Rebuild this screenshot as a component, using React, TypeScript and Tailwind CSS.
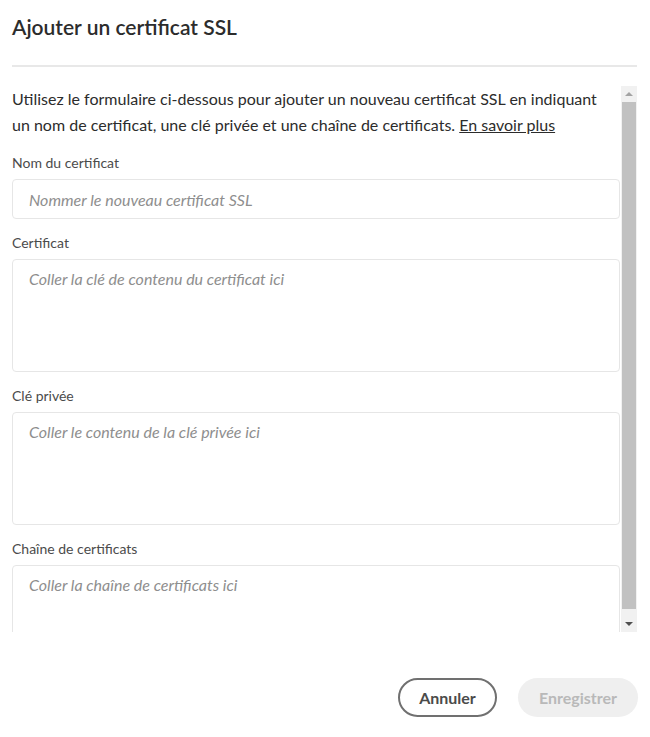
const fields = [
  { label: "Nom du certificat", placeholder: "Nommer le nouveau certificat SSL", multiline: false },
  { label: "Certificat", placeholder: "Coller la clé de contenu du certificat ici", multiline: true },
  { label: "Clé privée", placeholder: "Coller le contenu de la clé privée ici", multiline: true },
  { label: "Chaîne de certificats", placeholder: "Coller la chaîne de certificats ici", multiline: true },
];

function ScrollArrow({ up, color }: { up?: boolean; color: string }) {
  return (
    <div className="flex h-4 items-center justify-center">
      <svg width="8" height="4" viewBox="0 0 8 4" fill={color}>
        {up ? <path d="M0 4 L4 0 L8 4 Z" /> : <path d="M0 0 L8 0 L4 4 Z" />}
      </svg>
    </div>
  );
}

export default function App() {
  return (
    <div className="flex h-[737px] w-[650px] flex-col bg-white px-3 font-['Lato',sans-serif] text-[#2c2c2c]">
      <h1 className="mt-[13px] text-[21px] font-semibold leading-[28px] text-[#2c2c2c]">
        Ajouter un certificat SSL
      </h1>

      <div className="mt-[24px] h-[2px] w-[625px] bg-[#e8e8e8]" />

      <div className="mt-[19px] flex h-[546px] w-[625px]">
        <div className="flex-1 overflow-hidden pr-[1px]">
          <p className="pr-4 text-[16px] leading-[26px] text-[#2c2c2c]">
            Utilisez le formulaire ci-dessous pour ajouter un nouveau certificat SSL en indiquant un nom de
            certificat, une clé privée et une chaîne de certificats.{" "}
            <a href="#" className="underline">
              En savoir plus
            </a>
          </p>

          <div className="mt-[15px] flex flex-col gap-[14px]">
            {fields.map((field) => (
              <div key={field.label} className="flex flex-col">
                <label className="mb-[6px] text-[14px] leading-[20px] text-[#4b4b4b]">
                  {field.label}
                </label>
                {field.multiline ? (
                  <textarea
                    placeholder={field.placeholder}
                    className="h-[113px] w-full resize-none rounded-[4px] border border-[#e6e6e6] px-4 py-[7px] text-[16px] leading-[24px] placeholder:italic placeholder:text-[#8e8e8e] focus:outline-none"
                  />
                ) : (
                  <input
                    placeholder={field.placeholder}
                    className="h-10 w-full rounded-[4px] border border-[#e6e6e6] px-4 text-[16px] placeholder:italic placeholder:text-[#8e8e8e] focus:outline-none"
                  />
                )}
              </div>
            ))}
          </div>
        </div>

        {/* scrollbar */}
        <div className="flex w-4 flex-col bg-[#f1f1f1]">
          <ScrollArrow up color="#a3a3a3" />
          <div className="flex-1 px-[1px] pb-[7px]">
            <div className="h-full bg-[#c1c1c1]" />
          </div>
          <ScrollArrow color="#505050" />
        </div>
      </div>

      <div className="mt-[46px] flex justify-end gap-[21px]">
        <button className="h-[39px] w-[99px] rounded-full border-2 border-[#707070] text-[16px] font-bold text-[#4b4b4b]">
          Annuler
        </button>
        <button className="h-[39px] w-[120px] rounded-full bg-[#efefef] text-[16px] font-bold text-[#b9b9b9]">
          Enregistrer
        </button>
      </div>
    </div>
  );
}
